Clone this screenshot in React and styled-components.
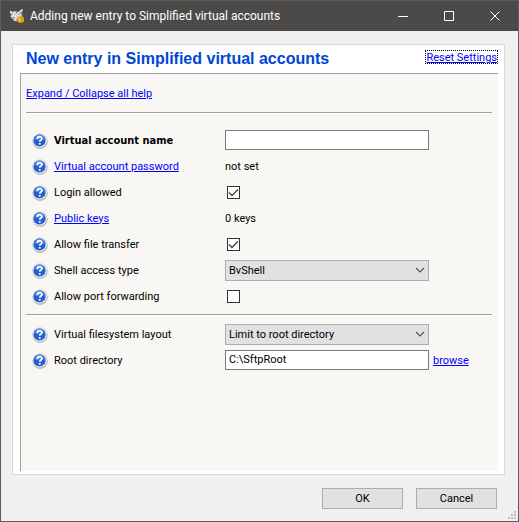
import React, { useState } from "react";
import styled, { createGlobalStyle, css } from "styled-components";

const GlobalStyle = createGlobalStyle`
  *, *::before, *::after { box-sizing: border-box; }
  html, body { margin: 0; background: #f0f0f0; }
  body, input, select, button {
    font-family: Roboto, Tahoma, sans-serif;
    font-size: 11px;
    color: #000;
  }
`;

const Window = styled.div`
  display: flex;
  flex-direction: column;
  min-height: 100vh;
  border: 1px solid #5c5b5a;
  background: #f0f0f0;
`;

const TitleBar = styled.header`
  display: flex;
  align-items: center;
  height: 30px;
  padding-left: 8px;
  background: #4c4a48;
  color: #fff;
`;

const Title = styled.h1`
  flex: 1;
  margin: 0 0 0 5px;
  font: 400 12px/16px Roboto, sans-serif;
  white-space: nowrap;
`;

const CaptionButton = styled.button`
  display: flex;
  align-items: center;
  justify-content: center;
  width: 46px;
  height: 30px;
  padding: 0 1px 1px 0;
  border: 0;
  background: transparent;
`;

const Page = styled.main`
  flex: 1;
  display: flex;
  flex-direction: column;
  margin: 13px 13px 0 11px;
  padding: 0 6px 3px 7px;
  border: 1px solid #d9d9d9;
  background: #fff;
`;

const PageHeader = styled.div`
  display: flex;
  justify-content: space-between;
  align-items: flex-start;
  height: 28px;
  padding: 4px 0 0 6px;
`;

const Heading = styled.h2`
  margin: 0;
  font: 700 16px/20px "Liberation Sans", Arial, sans-serif;
  color: #0046d5;
  white-space: nowrap;
`;

const Link = styled.a`
  color: #0000ff;
  line-height: 14px;
  text-decoration: underline;
  text-underline-offset: 1px;
  white-space: nowrap;
  ${(p) => p.$focused && css`
    height: 14px;
    margin-top: 1px;
    line-height: 13px;
    border: 1px dotted #000;
  `}
`;

const Form = styled.form`
  flex: 1;
  padding: 13px 6px 0 5px;
  border-top: 1px solid #a0a0a0;
  border-left: 1px solid #a0a0a0;
  background: #f8f7f3;
`;

const HelpToggle = styled.div`
  display: flex;
  height: 25px;
`;

const Divider = styled.hr`
  height: 2px;
  margin: 0;
  border: 0;
  border-top: 1px solid #a0a0a0;
  background: #fff;
`;

const Rows = styled.div`
  padding: ${(p) => (p.$tight ? "5px" : "13px")} 0 5px 6px;
`;

const Row = styled.div`
  display: grid;
  grid-template-columns: 22px 171px minmax(0, 204px) auto;
  justify-content: start;
  align-items: center;
  height: 26px;
`;

const HelpButton = styled.button`
  display: flex;
  width: 16px;
  height: 17px;
  padding: 1px 0 0;
  border: 0;
  background: transparent;
`;

const Label = styled.label`
  padding-top: 1px;
  line-height: 14px;
  white-space: nowrap;
  ${(p) => p.$strong && css`
    font-family: "DejaVu Sans Condensed", "DejaVu Sans", sans-serif;
    font-stretch: condensed;
    font-weight: 700;
  `}
`;

const Value = styled.span`
  padding-top: 1px;
  line-height: 14px;
`;

const Input = styled.input`
  width: 100%;
  height: 20px;
  padding: 0 3px 2px;
  border: 1px solid #7a7a7a;
  border-radius: 0;
  background: #fff;
  outline: none;
`;

const SelectBox = styled.div`
  display: grid;
  align-items: center;
  > * { grid-area: 1 / 1; }
  > svg { justify-self: end; margin-right: 4px; pointer-events: none; }
`;

const Select = styled.select`
  width: 100%;
  height: 21px;
  padding: 0 20px 0 3px;
  border: 1px solid #adadad;
  border-radius: 0;
  background: #e1e1e1;
  appearance: none;
`;

const CheckBox = styled.div`
  display: grid;
  width: 13px;
  height: 13px;
  margin-left: 2px;
  > * { grid-area: 1 / 1; }
  > svg { pointer-events: none; }
`;

const CheckInput = styled.input`
  width: 13px;
  height: 13px;
  margin: 0;
  border: 1px solid #333;
  background: #fff;
  appearance: none;
  &:not(:checked) + svg { visibility: hidden; }
`;

const Browse = styled(Link)`
  padding-top: 1px;
  margin-left: 4px;
`;

const Footer = styled.footer`
  display: flex;
  justify-content: flex-end;
  align-items: center;
  gap: 13px;
  height: 46px;
  padding-right: 2px;
`;

const PushButton = styled.button`
  width: 81px;
  height: 21px;
  padding: 0;
  border: 1px solid #adadad;
  background: #e1e1e1;
`;

const Grip = styled.svg`
  align-self: flex-end;
  margin: 0 0 2px -2px;
`;

const AppIcon = () => (
  <svg width="16" height="16" viewBox="0 0 16 16" aria-hidden="true">
    <path d="M1 2.500 4 4l2-1 3 1 4-3 1 1-2 4 1 3-2 4H5L3 10 1 8l2-1-2-2z" fill="#d9d9d6" />
    <path d="m3 5 3 2m1-3 2 3m3-3L9 7M4 9l2 3m-1-3 4-1" stroke="#777" fill="none" />
    <path d="m4 4 1 4 3 1 1-4M6 10l1 2" stroke="#fff" fill="none" />
    <path d="M9 9V7.500a2 2 0 0 1 4 0V9" stroke="#b9b5aa" fill="none" />
    <path d="M8 9.500 13 8l2 2v4l-4 1-4-2z" fill="#df9a24" />
    <path d="m9 10 2 1v3" stroke="#ffd668" fill="none" />
  </svg>
);

const HelpIcon = () => (
  <svg width="16" height="16" viewBox="0 0 16 16" aria-hidden="true">
    <circle cx="8" cy="8.200" r="7.600" fill="#a6a7aa" />
    <circle cx="7.700" cy="7.600" r="7.200" fill="#e9ecf2" />
    <circle cx="7.500" cy="7.500" r="6.100" fill="#2460cc" />
    <path d="M2.500 6.500a5 5 0 0 1 10 0c-3 1-7 1-10 0" fill="#4b82df" />
    <path d="M5.300 5.900c0-3 4.600-3 4.600-.3 0 1.700-2.200 1.700-2.200 3.200" stroke="#fff" strokeWidth="1.700" fill="none" />
    <path d="M6.800 10h1.800v1.700H6.800z" fill="#fff" />
  </svg>
);

const Chevron = () => (
  <svg width="10" height="6" viewBox="0 0 10 6" aria-hidden="true">
    <path d="m1 1 4 4 4-4" stroke="#555" strokeWidth="1.200" fill="none" />
  </svg>
);

const Tick = () => (
  <svg width="13" height="13" viewBox="0 0 13 13" aria-hidden="true">
    <path d="m2 6.500 3 3 6-6" stroke="#444" strokeWidth="1.400" fill="none" />
  </svg>
);

const captionShapes = {
  Minimize: <path d="M0 5.500h10" />,
  Maximize: <path d="M.5.500h9v9h-9z" />,
  Close: <path d="m.5.500 9 9m0-9-9 9" />,
};

function Field({ label, id, strong, href, extra, children }) {
  return (
    <Row>
      <HelpButton type="button" aria-label={`Help: ${label}`}><HelpIcon /></HelpButton>
      {href ? <Value><Link href={href}>{label}</Link></Value> : <Label htmlFor={id} $strong={strong}>{label}</Label>}
      {children}
      {extra}
    </Row>
  );
}

function Check({ id, initial }) {
  const [checked, setChecked] = useState(initial);
  return (
    <CheckBox>
      <CheckInput id={id} type="checkbox" checked={checked} onChange={(e) => setChecked(e.target.checked)} />
      <Tick />
    </CheckBox>
  );
}

function Dropdown({ id, options }) {
  return (
    <SelectBox>
      <Select id={id}>{options.map((o) => <option key={o}>{o}</option>)}</Select>
      <Chevron />
    </SelectBox>
  );
}

export default function App() {
  return (
    <>
      <GlobalStyle />
      <Window>
        <TitleBar>
          <AppIcon />
          <Title>Adding new entry to Simplified virtual accounts</Title>
          {Object.entries(captionShapes).map(([name, shape]) => (
            <CaptionButton key={name} type="button" aria-label={name}>
              <svg width="10" height="10" viewBox="0 0 10 10" stroke="#fff" fill="none">{shape}</svg>
            </CaptionButton>
          ))}
        </TitleBar>
        <Page>
          <PageHeader>
            <Heading>New entry in Simplified virtual accounts</Heading>
            <Link href="#reset" $focused>Reset Settings</Link>
          </PageHeader>
          <Form id="entry" onSubmit={(e) => e.preventDefault()}>
            <HelpToggle><Link href="#help">Expand / Collapse all help</Link></HelpToggle>
            <Divider />
            <Rows>
              <Field label="Virtual account name" id="name" strong><Input id="name" type="text" /></Field>
              <Field label="Virtual account password" href="#password"><Value>not set</Value></Field>
              <Field label="Login allowed" id="login"><Check id="login" initial /></Field>
              <Field label="Public keys" href="#keys"><Value>0 keys</Value></Field>
              <Field label="Allow file transfer" id="transfer"><Check id="transfer" initial /></Field>
              <Field label="Shell access type" id="shell"><Dropdown id="shell" options={["BvShell"]} /></Field>
              <Field label="Allow port forwarding" id="ports"><Check id="ports" initial={false} /></Field>
            </Rows>
            <Divider />
            <Rows $tight>
              <Field label="Virtual filesystem layout" id="layout">
                <Dropdown id="layout" options={["Limit to root directory"]} />
              </Field>
              <Field label="Root directory" id="root-dir" extra={<Browse href="#browse">browse</Browse>}>
                <Input id="root-dir" type="text" defaultValue={"C:\\SftpRoot"} />
              </Field>
            </Rows>
          </Form>
        </Page>
        <Footer>
          <PushButton type="submit" form="entry">OK</PushButton>
          <PushButton type="button">Cancel</PushButton>
          <Grip width="8" height="8" viewBox="0 0 8 8" fill="#bfbfbf" aria-hidden="true">
            <path d="M6 0h2v2H6zM3 3h2v2H3zM6 3h2v2H6zM0 6h2v2H0zM3 6h2v2H3zM6 6h2v2H6z" />
          </Grip>
        </Footer>
      </Window>
    </>
  );
}
